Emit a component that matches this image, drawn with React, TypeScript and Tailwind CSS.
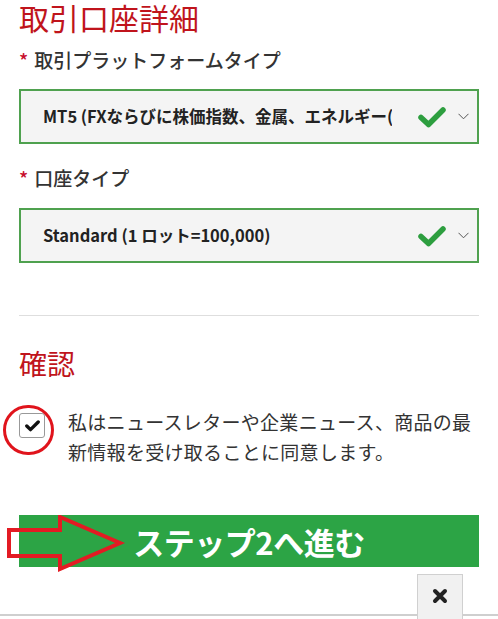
import React from "react";

const jp = { fontFamily: '"Noto Sans CJK JP", "Noto Sans", sans-serif' };

function GreenCheck() {
  return (
    <svg width="28" height="22" viewBox="0 0 28 22" className="shrink-0">
      <path d="M3 11.5 L10.5 18.5 L25 4" fill="none" stroke="#2d9e3f" strokeWidth="5.5" strokeLinecap="round" strokeLinejoin="round" />
    </svg>
  );
}

function Chevron() {
  return (
    <svg width="11" height="7" viewBox="0 0 11 7" className="shrink-0">
      <path d="M0.5 0.8 L5.5 5.8 L10.5 0.8" fill="none" stroke="#555" strokeWidth="1" />
    </svg>
  );
}

function Select({ text }: { text: string }) {
  return (
    <div className="mx-[19px] h-[55px] border-2 border-[#4fa14f] bg-[#f4f4f4] flex items-center pl-[22px] pr-[8px]">
      <div className="w-[349px] shrink-0 overflow-hidden whitespace-nowrap text-[16.5px] font-bold text-[#222]" style={jp}>
        {text}
      </div>
      <div className="flex-1" />
      <GreenCheck />
      <div className="w-[12px]" />
      <Chevron />
    </div>
  );
}

function Label({ text }: { text: string }) {
  return (
    <div className="mx-[19px] flex items-center h-[24px] text-[19px] font-medium text-[#333]" style={jp}>
      <span className="text-[#c8102e] mr-[6px] text-[19px]">*</span>
      {text}
    </div>
  );
}

export default function App() {
  return (
    <div className="relative w-[498px] h-[619px] overflow-hidden bg-white" style={jp}>
      <div className="mx-[19px] h-[33px] flex items-center text-[30px] leading-none text-[#c0141c]">
        取引口座詳細
      </div>
      <div className="h-[15px]" />
      <Label text="取引プラットフォームタイプ" />
      <div className="h-[17px]" />
      <Select text="MT5 (FXならびに株価指数、金属、エネルギー(CFD))" />
      <div className="h-[22px]" />
      <Label text="口座タイプ" />
      <div className="h-[18px]" />
      <Select text="Standard (1 ロット=100,000)" />
      <div className="h-[52px]" />
      <div className="mx-[19px] h-px bg-[#dedede]" />
      <div className="h-[31px]" />
      <div className="mx-[19px] h-[32px] flex items-center text-[28px] leading-none text-[#c0141c]">確認</div>
      <div className="h-[28px]" />
      <div className="mx-[19px] flex items-start">
        <div className="relative w-[49px] shrink-0 pt-[6px]">
          <div className="w-[26px] h-[25px] border border-[#999] rounded-[3px] bg-white flex items-center justify-center">
            <svg width="15" height="12" viewBox="0 0 15 12">
              <path d="M1.8 6 L5.5 9.6 L13.2 2" fill="none" stroke="#111" strokeWidth="3.4" strokeLinecap="round" strokeLinejoin="round" />
            </svg>
          </div>
          <div className="absolute left-[-16px] top-[-2px] w-[51px] h-[50px] rounded-full border-[3px] border-[#e0141c]" />
        </div>
        <div className="text-[19px] leading-[30px] text-[#333] tracking-[0.3px]">
          私はニュースレターや企業ニュース、商品の最新情報を受け取ることに同意します。
        </div>
      </div>
      <div className="h-[48px]" />
      <div className="relative mx-[19px] h-[52px] bg-[#2ca445] flex items-center justify-center">
        <span className="text-white text-[31px] font-bold leading-none tracking-[-0.5px]">ステップ2へ進む</span>
        <svg className="absolute left-[-12px] top-[0px]" width="126" height="58" viewBox="0 0 126 58">
          <path d="M2 15 L53 15 L53 2 L113 28 L53 54 L53 41 L2 41 Z" fill="none" stroke="#e31b23" strokeWidth="4" strokeLinejoin="miter" />
        </svg>
      </div>
      <div className="absolute left-0 right-0 top-[614px] h-[2px] bg-[#cfcfcf]" />
      <div className="absolute left-[417px] top-[574px] w-[46px] h-[50px] bg-[#f1f1f1] border border-[#d0d0d0] flex items-start justify-center pt-[13px]">
        <svg width="16" height="16" viewBox="0 0 16 16">
          <path d="M3 3 L13 13 M13 3 L3 13" stroke="#222" strokeWidth="4" strokeLinecap="round" />
        </svg>
      </div>
    </div>
  );
}
